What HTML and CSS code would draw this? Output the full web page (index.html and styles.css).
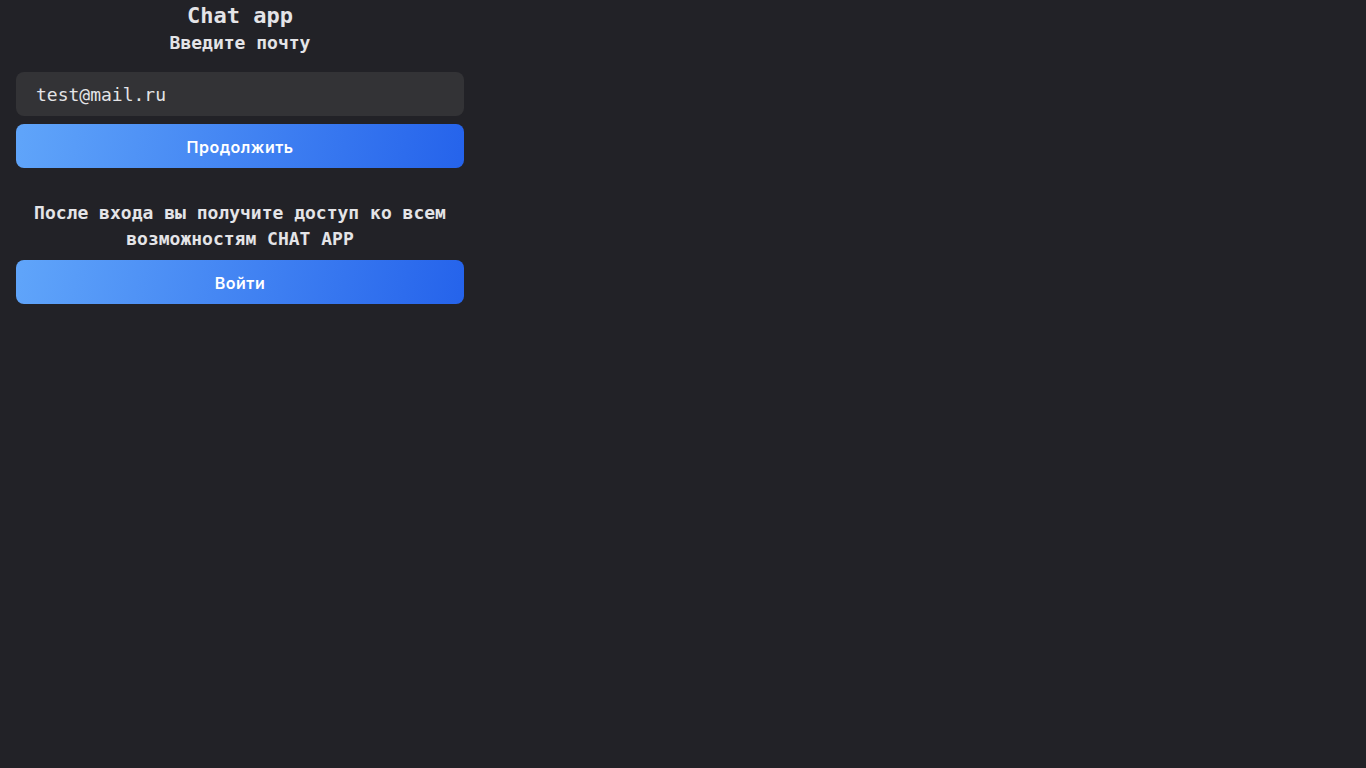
FILE: index.html
```html
<!DOCTYPE html>
<html lang="ru">
<head>
<meta charset="utf-8">
<title>Chat app</title>
<link rel="stylesheet" href="styles.css">
</head>
<body>
<main class="auth">
  <h1 class="title">Chat app</h1>
  <h2 class="subtitle">Введите почту</h2>
  <form class="form">
    <input class="input" type="email" value="test@mail.ru">
    <button class="btn" type="button">Продолжить</button>
  </form>
  <p class="note">После входа вы получите доступ ко всем возможностям CHAT APP</p>
  <button class="btn" type="button">Войти</button>
</main>
</body>
</html>
```
FILE: styles.css
```css
html, body {
  margin: 0;
  padding: 0;
  background: #222227;
  color: #e4e4e7;
  font-family: "DejaVu Sans Mono", monospace;
}
.auth {
  width: 448px;
  padding: 0 16px;
  display: flex;
  flex-direction: column;
}
.title {
  margin: 2px 0 0;
  font-size: 22px;
  line-height: 28px;
  font-weight: 700;
  text-align: center;
}
.subtitle {
  margin: 0;
  font-size: 18px;
  line-height: 26px;
  font-weight: 700;
  text-align: center;
}
.form {
  margin-top: 16px;
  display: flex;
  flex-direction: column;
  gap: 8px;
}
.input {
  box-sizing: border-box;
  height: 44px;
  border: none;
  outline: none;
  border-radius: 8px;
  background: #333336;
  color: #e4e4e7;
  padding: 0 20px;
  font-family: "DejaVu Sans Mono", monospace;
  font-size: 18px;
}
.btn {
  height: 44px;
  padding: 1px 0 0;
  border: none;
  border-radius: 8px;
  background: linear-gradient(100deg, #60a5fa, #2563eb);
  color: #ffffff;
  font-family: "Inter", "Noto Sans", sans-serif;
  font-size: 16px;
  font-weight: 600;
  letter-spacing: 0.5px;
  cursor: pointer;
}
.note {
  margin: 32px 0 8px;
  font-size: 18px;
  line-height: 26px;
  font-weight: 700;
  text-align: center;
}
```
